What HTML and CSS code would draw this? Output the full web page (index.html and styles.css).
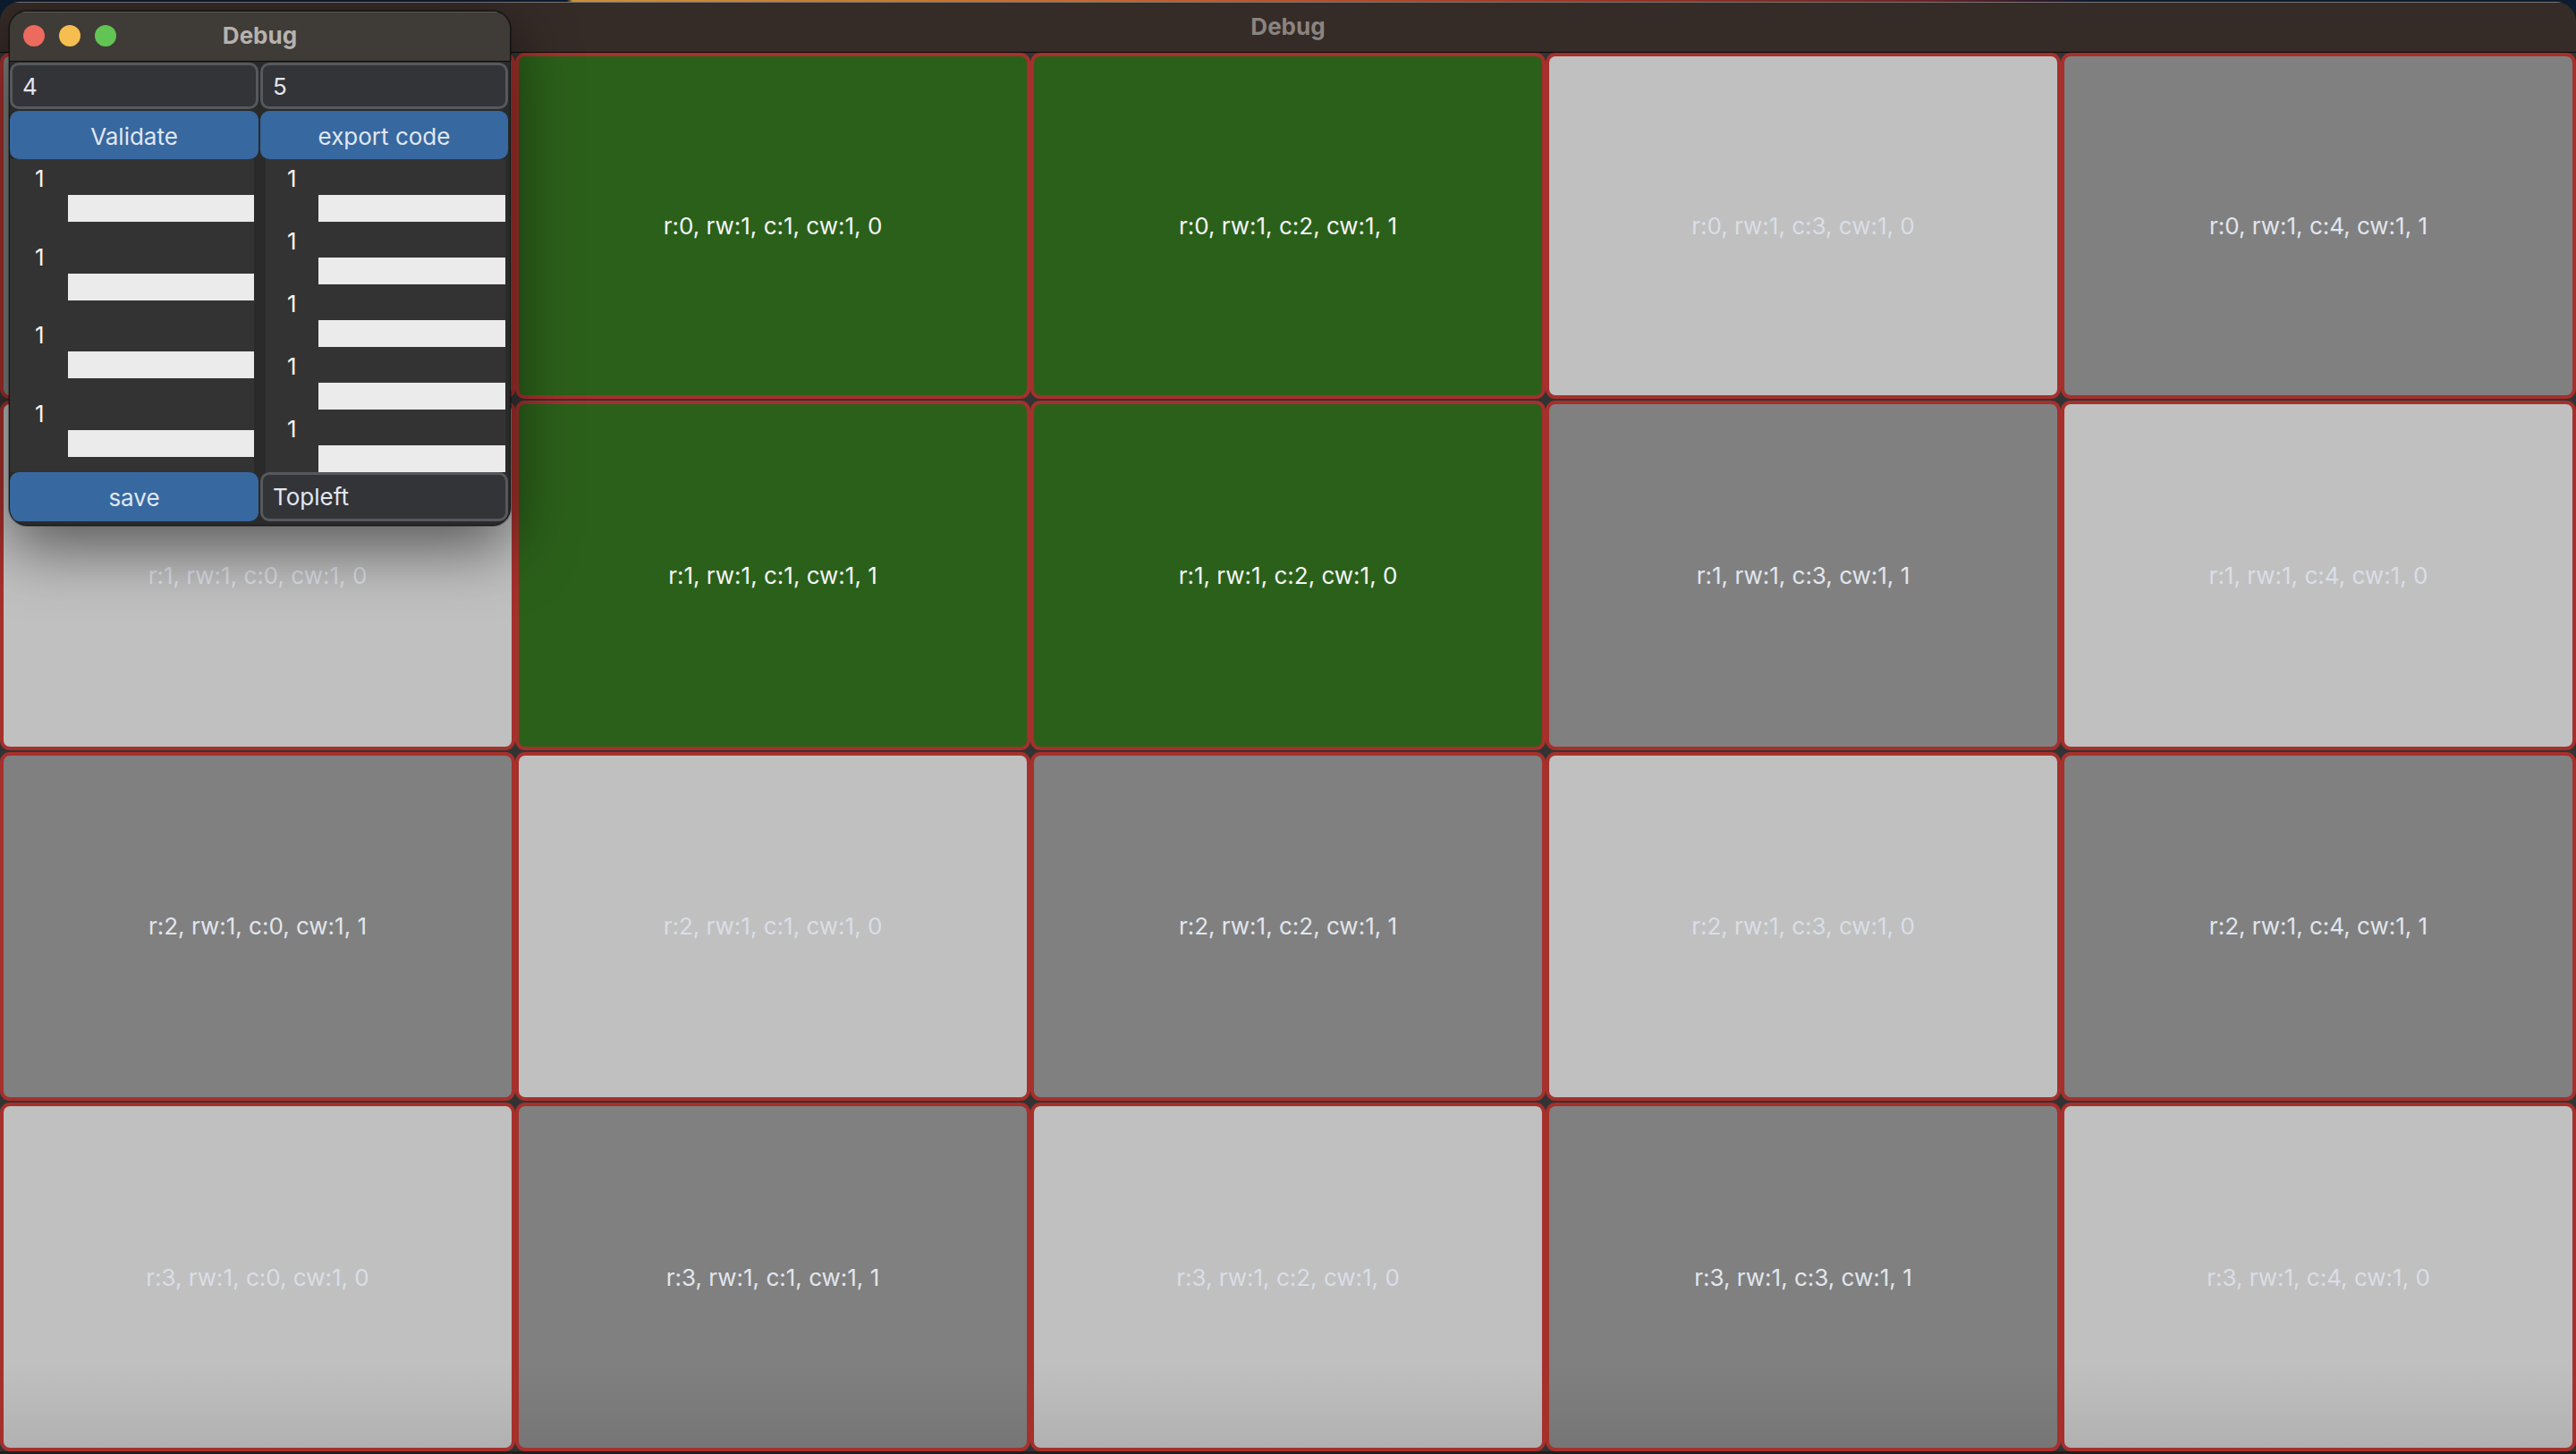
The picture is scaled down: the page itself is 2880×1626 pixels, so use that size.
FILE: index.html
```html
<!DOCTYPE html>
<html>
<head>
<meta charset="utf-8">
<title>Debug</title>
<link rel="stylesheet" href="styles.css">
</head>
<body>
<div class="main-window">
  <div class="titlebar"><span class="title">Debug</span></div>
  <div class="grid">
    <div class="cell dark">r:0, rw:1, c:0, cw:1, 1</div>
    <div class="cell green">r:0, rw:1, c:1, cw:1, 0</div>
    <div class="cell green">r:0, rw:1, c:2, cw:1, 1</div>
    <div class="cell light">r:0, rw:1, c:3, cw:1, 0</div>
    <div class="cell dark">r:0, rw:1, c:4, cw:1, 1</div>

    <div class="cell light">r:1, rw:1, c:0, cw:1, 0</div>
    <div class="cell green">r:1, rw:1, c:1, cw:1, 1</div>
    <div class="cell green">r:1, rw:1, c:2, cw:1, 0</div>
    <div class="cell dark">r:1, rw:1, c:3, cw:1, 1</div>
    <div class="cell light">r:1, rw:1, c:4, cw:1, 0</div>

    <div class="cell dark">r:2, rw:1, c:0, cw:1, 1</div>
    <div class="cell light">r:2, rw:1, c:1, cw:1, 0</div>
    <div class="cell dark">r:2, rw:1, c:2, cw:1, 1</div>
    <div class="cell light">r:2, rw:1, c:3, cw:1, 0</div>
    <div class="cell dark">r:2, rw:1, c:4, cw:1, 1</div>

    <div class="cell light last">r:3, rw:1, c:0, cw:1, 0</div>
    <div class="cell dark last">r:3, rw:1, c:1, cw:1, 1</div>
    <div class="cell light last">r:3, rw:1, c:2, cw:1, 0</div>
    <div class="cell dark last">r:3, rw:1, c:3, cw:1, 1</div>
    <div class="cell light last">r:3, rw:1, c:4, cw:1, 0</div>
  </div>
</div>

<div class="debug-window">
  <div class="dbg-titlebar">
    <div class="lights">
      <span class="light-dot red"></span>
      <span class="light-dot yellow"></span>
      <span class="light-dot green-dot"></span>
    </div>
    <span class="dbg-title">Debug</span>
  </div>
  <div class="dbg-content">
    <div class="field">4</div>
    <div class="field">5</div>
    <div class="btn">Validate</div>
    <div class="btn">export code</div>
    <div class="list list-left">
      <div class="item"><div class="label">1</div><div class="bar"></div></div>
      <div class="item"><div class="label">1</div><div class="bar"></div></div>
      <div class="item"><div class="label">1</div><div class="bar"></div></div>
      <div class="item"><div class="label">1</div><div class="bar"></div></div>
    </div>
    <div class="list list-right">
      <div class="item"><div class="label">1</div><div class="bar"></div></div>
      <div class="item"><div class="label">1</div><div class="bar"></div></div>
      <div class="item"><div class="label">1</div><div class="bar"></div></div>
      <div class="item"><div class="label">1</div><div class="bar"></div></div>
      <div class="item"><div class="label">1</div><div class="bar"></div></div>
    </div>
    <div class="btn">save</div>
    <div class="field">Topleft</div>
  </div>
</div>
</body>
</html>
```

FILE: styles.css
```css
* { box-sizing: border-box; }

html, body {
  margin: 0;
  padding: 0;
  width: 2880px;
  height: 1626px;
  overflow: hidden;
}

body {
  font-family: Inter, "Noto Sans", "Liberation Sans", sans-serif;
  background: linear-gradient(90deg, #0d1c30 0, #0d1c30 634px, #c8903a 640px, #c46a30 1200px, #a83a28 1700px, #6e2428 2150px, #2a1830 2290px, #0d1c30 2340px);
  position: relative;
}

.main-window {
  margin-top: 2px;
  height: 1624px;
  border-radius: 22px 22px 0 0;
  overflow: hidden;
  background: #1f1f1f;
  display: flex;
  flex-direction: column;
}

.titlebar {
  height: 57px;
  flex: none;
  background: #352b27;
  border-top: 1px solid #7a746f;
  border-bottom: 1px solid #0a0a0a;
  display: flex;
  align-items: center;
  justify-content: center;
}

.title {
  color: #8a8480;
  font-weight: 700;
  font-size: 26px;
  margin-top: -2px;
}

.grid {
  display: grid;
  grid-template-columns: repeat(5, 576px);
  grid-template-rows: 387px 390.5px 390.5px 390px;
  row-gap: 2px;
  background: #333333;
  flex: none;
}

.cell {
  border: 4px solid #a5302c;
  border-radius: 11px;
  display: flex;
  align-items: center;
  justify-content: center;
  font-size: 26px;
  color: #e2e6ee;
}

.cell.dark { background-color: #808080; }
.cell.light { background-color: #c0c0c0; color: #dadee6; }
.cell.green { background-color: #2b601a; color: #f4f6f8; }
.cell.last {
  background-image: linear-gradient(to bottom, rgba(0,0,0,0) 75%, rgba(0,0,0,0.08) 100%);
}

/* floating debug window */
.debug-window {
  position: absolute;
  left: 10px;
  top: 12px;
  width: 561px;
  height: 576px;
  border: 1px solid #141414;
  border-radius: 20px;
  background: #2a2a2a;
  overflow: hidden;
  box-shadow: 0 24px 70px rgba(0,0,0,0.55), 0 0 0 1px rgba(0,0,0,0.3);
  display: flex;
  flex-direction: column;
}

.dbg-titlebar {
  height: 56px;
  flex: none;
  background: #3f3b37;
  border-top: 1px solid #5e5955;
  border-bottom: 1px solid #0c0c0c;
  display: flex;
  align-items: center;
  justify-content: center;
  position: relative;
}

.lights {
  position: absolute;
  left: 15px;
  top: 14px;
  display: flex;
  gap: 16px;
}

.light-dot {
  width: 24px;
  height: 24px;
  border-radius: 50%;
  display: block;
}
.light-dot.red { background: #ed6a5e; }
.light-dot.yellow { background: #f5be4f; }
.light-dot.green-dot { background: #61c454; }

.dbg-title {
  color: #b7b2ad;
  font-weight: 700;
  font-size: 26px;
  margin-top: -4px;
}

.dbg-content {
  flex: 1;
  display: grid;
  grid-template-columns: 278px 277px;
  grid-template-rows: 52px 56px 350px 55px;
  column-gap: 2px;
  padding: 1px 2px 2px 0;
  background: #2a2a2a;
}

.dbg-content > .btn:nth-child(3),
.dbg-content > .btn:nth-child(4) {
  margin-top: 2px;
}

.field {
  background: #333437;
  border: 3px solid #55585d;
  border-radius: 10px;
  color: #e2e6ee;
  font-size: 26px;
  display: flex;
  align-items: center;
  padding-left: 11px;
}

.btn {
  background: #3768a0;
  border-radius: 10px;
  color: #e0e7f1;
  font-size: 26px;
  display: flex;
  align-items: center;
  justify-content: center;
  padding-top: 2px;
}

.list {
  background: #333333;
  display: flex;
  flex-direction: column;
  overflow: hidden;
}

.list-left {
  margin-right: 5px;
}

.list-right {
  margin-left: 6px;
  margin-right: 3px;
}

.item {
  flex: 1;
  display: flex;
  flex-direction: column;
}

.label {
  height: 40px;
  padding-top: 4px;
  line-height: 36px;
  font-size: 26px;
  color: #f2f2f2;
}

.bar {
  height: 30px;
  background: #ebebeb;
}

.list-left .label { padding-left: 28px; }
.list-left .bar { margin-left: 65px; }
.list-right .label { padding-left: 24px; }
.list-right .bar { margin-left: 59px; }
```
